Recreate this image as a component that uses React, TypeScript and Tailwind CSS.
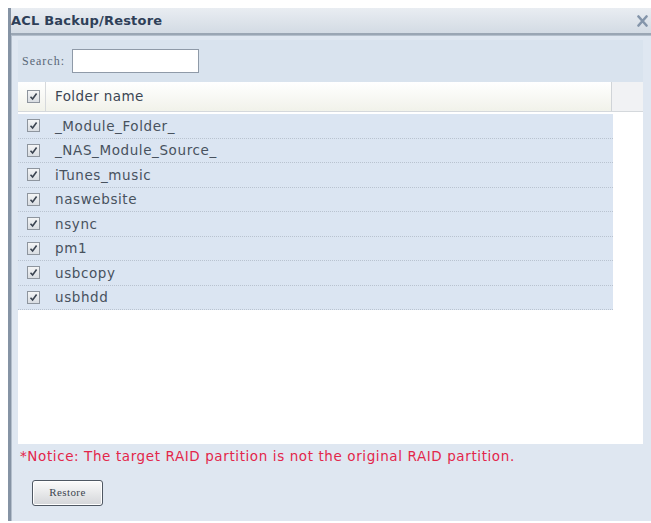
import React from 'react';

const folders = [
    '_Module_Folder_',
    '_NAS_Module_Source_',
    'iTunes_music',
    'naswebsite',
    'nsync',
    'pm1',
    'usbcopy',
    'usbhdd',
];

const sans = { fontFamily: '"DejaVu Sans", Verdana, sans-serif' };
const serif = { fontFamily: '"Liberation Serif", "DejaVu Serif", serif' };

// small grey checkbox with a dark tick
const Check: React.FC = () => (
    <span className="flex h-[13px] w-[13px] items-center justify-center border border-[#8e959e] bg-gradient-to-b from-[#f4f5f6] to-[#d9dde2]">
        <svg width="9" height="9" viewBox="0 0 9 9">
            <path d="M1.5 4.8 L3.6 7 L7.6 1.6" fill="none" stroke="#3a4350" strokeWidth="1.6" />
        </svg>
    </span>
);

const App: React.FC = () => {
    return (
        <div className="h-[523px] w-[651px] overflow-hidden bg-white pt-[8px]" style={sans}>
            <div className="ml-[8px] flex h-[513px] w-[660px] flex-col border-l-[3px] border-[#8593a4] bg-[#dfe7f1]">
                {/* Title bar */}
                <div className="flex h-[27px] shrink-0 items-center justify-between border-b-2 border-[#9aa6b4] bg-gradient-to-b from-[#e9edf2] to-[#d3dbe4] pr-[20px]">
                    <span className="text-[13px] font-bold tracking-[0.2px] text-[#2e3f58]">ACL Backup/Restore</span>
                    <svg width="11" height="12" viewBox="0 0 11 12">
                        <path d="M1.5 1.5 L9.5 10.5 M9.5 1.5 L1.5 10.5" stroke="#8495aa" strokeWidth="2.6" strokeLinecap="round" />
                    </svg>
                </div>

                <div className="flex flex-1 flex-col border-t border-l border-[#b4bfcc] bg-[#dfe7f1] pl-[6px] pr-[25px]">
                    {/* Search */}
                    <div className="mt-[4px] flex h-[42px] items-center bg-[#d9e3ee] pl-[4px]">
                        <span className="text-[12px] tracking-[1px] text-[#5a6777]" style={serif}>Search:</span>
                        <span className="ml-[7px] h-[24px] w-[127px] border border-[#8f9aa8] bg-white" />
                    </div>

                    {/* Grid */}
                    <div className="flex h-[362px] flex-col bg-white">
                        <div className="flex h-[30px] shrink-0 border-b border-[#d4d8dc] bg-gradient-to-b from-[#ffffff] to-[#f1f2ea]">
                            <div className="flex w-[28px] items-center border-r border-[#d6d9dc] pl-[9px]">
                                <Check />
                            </div>
                            <div className="flex w-[566px] items-center border-r border-[#d0d4d8] pl-[9px] text-[13.5px] tracking-[0.4px] text-[#3b4654]">
                                Folder name
                            </div>
                            <div className="flex-1 bg-[#f1f2f4]" />
                        </div>
                        <div className="mt-[2px] w-[595px] bg-[#dbe5f2]">
                            {folders.map((name) => (
                                <div
                                    key={name}
                                    className="flex h-[24.5px] items-center border-b border-dotted border-[#b9c3d0]"
                                >
                                    <div className="flex w-[28px] items-center pl-[9px]">
                                        <Check />
                                    </div>
                                    <span className="pl-[9px] text-[13.5px] tracking-[0.6px] text-[#48525e]">{name}</span>
                                </div>
                            ))}
                        </div>
                    </div>

                    <div className="mt-[2px] pl-[2px] text-[13.5px] tracking-[0.6px] text-[#e3264a]">
                        *Notice: The target RAID partition is not the original RAID partition.
                    </div>

                    <div className="mt-[13px] pl-[14px]">
                        <button
                            className="h-[26px] w-[71px] rounded-[3px] border border-[#4f5863] bg-gradient-to-b from-[#fbfbfb] to-[#d4d6d9] text-[11px] tracking-[0.4px] text-[#3c4550] shadow-[inset_0_0_0_1px_#ffffff]"
                            style={serif}
                        >
                            Restore
                        </button>
                    </div>
                </div>
            </div>
        </div>
    );
};

export default App;
